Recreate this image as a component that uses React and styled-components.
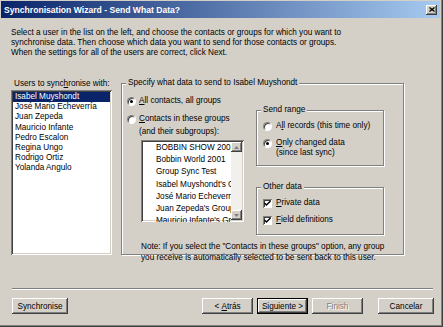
import React from "react";
import styled, { createGlobalStyle } from "styled-components";

const Global = createGlobalStyle`
  html, body { margin: 0; padding: 0; background: #d4d0c8; }
  body { font-family: "Liberation Sans", Arial, sans-serif; font-size: 8.2px; color: #000; }
  * { box-sizing: border-box; }
`;

const Window = styled.div`
  width: 443px;
  height: 327px;
  background: #d4d0c8;
  padding: 1px 3px 3px 1px;
  box-shadow: inset -1px -1px #404040, inset -2px -2px #808080;
  display: flex;
  flex-direction: column;
  overflow: hidden;
`;

const TitleBar = styled.div`
  height: 17px;
  display: flex;
  align-items: center;
  padding: 0 3px 0 3px;
  background: linear-gradient(to right, #0a246a, #a6caf0);
`;

const Title = styled.div`
  flex: 1;
  color: #fff;
  font-weight: bold;
  font-size: 8.6px;
  white-space: nowrap;
`;

const CloseButton = styled.div`
  width: 11px;
  height: 10px;
  background: #d4d0c8;
  box-shadow: inset -1px -1px #404040, inset 1px 1px #fff, inset -2px -2px #808080;
  display: flex;
  align-items: center;
  justify-content: center;
`;

const Content = styled.div`
  padding-left: 10px;
  display: flex;
  flex-direction: column;
`;

const Intro = styled.p`
  margin: 10px 0 0 0;
  line-height: 10px;
  white-space: nowrap;
`;

const MainRow = styled.div`
  display: flex;
  align-items: flex-start;
  margin-top: 21px;
  height: 176px;
`;

const UsersColumn = styled.div`
  width: 101px;
  display: flex;
  flex-direction: column;
`;

const FieldLabel = styled.div`
  line-height: 10px;
  padding-left: 3px;
  white-space: nowrap;
`;

const ListBox = styled.div`
  background: #fff;
  box-shadow: inset 1px 1px #808080, inset -1px -1px #fff, inset 2px 2px #404040, inset -2px -2px #d4d0c8;
  padding: 2px;
  overflow: hidden;
  position: relative;
`;

const UsersList = styled(ListBox)`
  margin-top: 1px;
  height: 165px;
`;

const UserRow = styled.div`
  line-height: 10.2px;
  padding-left: 2px;
  white-space: nowrap;
  background: ${(p) => (p.$selected ? "#0a246a" : "transparent")};
  color: ${(p) => (p.$selected ? "#fff" : "#000")};
`;

const GroupBox = styled.div`
  position: relative;
  border: 1px solid #808080;
  box-shadow: inset 1px 1px #fff, 1px 1px #fff;
`;

const Legend = styled.span`
  position: absolute;
  top: -6px;
  left: 4px;
  padding: 0 2px;
  line-height: 10px;
  background: #d4d0c8;
  white-space: nowrap;
`;

const MainGroup = styled(GroupBox)`
  margin-left: 9px;
  margin-top: 4px;
  width: 283px;
  height: 172px;
  padding: 12px 0 0 5px;
  display: flex;
  flex-direction: column;
`;

const GroupColumns = styled.div`
  display: flex;
  align-items: flex-start;
`;

const LeftPane = styled.div`
  width: 116px;
  display: flex;
  flex-direction: column;
`;

const RightPane = styled.div`
  width: 128px;
  margin-left: 13px;
  display: flex;
  flex-direction: column;
`;

const OptionRow = styled.div`
  display: flex;
  align-items: center;
  height: 10px;
  line-height: 10px;
  margin-top: ${(p) => p.$mt || 0}px;
  white-space: nowrap;
`;

const OptionText = styled.span`
  margin-left: ${(p) => p.$ml ?? 3}px;
`;

const SubText = styled.div`
  line-height: 10px;
  margin-top: ${(p) => p.$mt || 0}px;
  padding-left: ${(p) => p.$pl || 0}px;
  white-space: nowrap;
`;

const RadioCircle = styled.span`
  width: 9px;
  height: 9px;
  flex: none;
  border-radius: 50%;
  background: #fff;
  border: 1px solid;
  border-color: #808080 #fff #fff #808080;
  box-shadow: inset 1px 1px #404040;
  display: flex;
  align-items: center;
  justify-content: center;
  &::after {
    content: "";
    width: 3px;
    height: 3px;
    border-radius: 50%;
    background: ${(p) => (p.$checked ? "#000" : "transparent")};
  }
`;

const CheckSquare = styled.span`
  width: 9px;
  height: 9px;
  flex: none;
  background: #fff;
  box-shadow: inset 1px 1px #808080, inset -1px -1px #fff, inset 2px 2px #404040;
  display: flex;
  align-items: center;
  justify-content: center;
`;

const GroupsList = styled(ListBox)`
  margin-top: 3px;
  margin-left: 14px;
  width: 103px;
  height: 82px;
  padding-right: 13px;
`;

const GroupRow = styled.div`
  line-height: 12.2px;
  padding-left: 13px;
  white-space: nowrap;
  overflow: hidden;
`;

const ScrollBar = styled.div`
  position: absolute;
  top: 2px;
  right: 2px;
  bottom: 2px;
  width: 11px;
  display: flex;
  flex-direction: column;
  background-color: #f1f0ec;
`;

const ScrollArrow = styled.div`
  height: 10px;
  background: #d4d0c8;
  box-shadow: inset -1px -1px #404040, inset 1px 1px #fff, inset -2px -2px #808080;
  display: flex;
  align-items: center;
  justify-content: center;
  margin-top: ${(p) => (p.$bottom ? "auto" : 0)};
`;

const SendRangeBox = styled(GroupBox)`
  margin-top: 14px;
  height: 56px;
  padding: 10px 0 0 6px;
`;

const OtherDataBox = styled(GroupBox)`
  margin-top: 21px;
  height: 48px;
  padding: 10px 0 0 6px;
`;

const Note = styled.div`
  margin: 6px 0 0 14px;
  line-height: 11px;
  white-space: nowrap;
`;

const Separator = styled.div`
  margin: 33px 0 0 1px;
  width: 421px;
  height: 2px;
  border-top: 1px solid #808080;
  border-bottom: 1px solid #fff;
`;

const ButtonRow = styled.div`
  display: flex;
  margin: 8px 0 0 1px;
  width: 422px;
`;

const Button = styled.div`
  width: ${(p) => p.$w || 51}px;
  height: 16px;
  margin-left: ${(p) => p.$ml || 0}px;
  display: flex;
  align-items: center;
  justify-content: center;
  background: #d4d0c8;
  white-space: nowrap;
  color: ${(p) => (p.$disabled ? "#808080" : "#000")};
  text-shadow: ${(p) => (p.$disabled ? "1px 1px #fff" : "none")};
  box-shadow: ${(p) =>
    p.$default
      ? "inset 0 0 0 1px #000, inset -2px -2px #404040, inset 2px 2px #fff, inset -3px -3px #808080"
      : "inset -1px -1px #404040, inset 1px 1px #fff, inset -2px -2px #808080"};
`;

const U = styled.span`
  text-decoration: underline;
`;

const Check = () => (
  <svg width="7" height="7" viewBox="0 0 7 7">
    <path d="M0.5 3 L2.5 5 L6.5 1" fill="none" stroke="#000" strokeWidth="1.4" />
  </svg>
);

const Arrow = ({ down }) => (
  <svg width="5" height="3" viewBox="0 0 5 3">
    <path d={down ? "M0 0 H5 L2.5 3 Z" : "M0 3 H5 L2.5 0 Z"} fill="#808080" />
  </svg>
);

const users = [
  "Isabel Muyshondt",
  "José Mario Echeverría",
  "Juan Zepeda",
  "Mauricio Infante",
  "Pedro Escalon",
  "Regina Ungo",
  "Rodrigo Ortiz",
  "Yolanda Angulo",
];

const groups = [
  "BOBBIN SHOW 2001",
  "Bobbin World 2001",
  "Group Sync Test",
  "Isabel Muyshondt's Group",
  "José Mario Echeverría's Group",
  "Juan Zepeda's Group",
  "Mauricio Infante's Group",
];

export default function App() {
  return (
    <>
      <Global />
      <Window>
        <TitleBar>
          <Title>Synchronisation Wizard - Send What Data?</Title>
          <CloseButton>
            <svg width="6" height="5" viewBox="0 0 6 5">
              <path d="M0.5 0.5 L5.5 4.5 M5.5 0.5 L0.5 4.5" stroke="#000" strokeWidth="1.3" />
            </svg>
          </CloseButton>
        </TitleBar>
        <Content>
          <Intro>
            Select a user in the list on the left, and choose the contacts or groups for which you want to
            <br />
            synchronise data. Then choose which data you want to send for those contacts or groups.
            <br />
            When the settings for all of the users are correct, click Next.
          </Intro>
          <MainRow>
            <UsersColumn>
              <FieldLabel>
                Users to sync<U>h</U>ronise with:
              </FieldLabel>
              <UsersList>
                {users.map((u, i) => (
                  <UserRow key={u} $selected={i === 0}>
                    {u}
                  </UserRow>
                ))}
              </UsersList>
            </UsersColumn>
            <MainGroup>
              <Legend>Specify what data to send to Isabel Muyshondt</Legend>
              <GroupColumns>
                <LeftPane>
                  <OptionRow>
                    <RadioCircle $checked />
                    <OptionText>
                      <U>A</U>ll contacts, all groups
                    </OptionText>
                  </OptionRow>
                  <OptionRow $mt={8}>
                    <RadioCircle />
                    <OptionText>
                      <U>C</U>ontacts in these groups
                    </OptionText>
                  </OptionRow>
                  <SubText $mt={3} $pl={12}>
                    (and their subgroups):
                  </SubText>
                  <GroupsList>
                    {groups.map((g) => (
                      <GroupRow key={g}>{g}</GroupRow>
                    ))}
                    <ScrollBar>
                      <ScrollArrow>
                        <Arrow />
                      </ScrollArrow>
                      <ScrollArrow $bottom>
                        <Arrow down />
                      </ScrollArrow>
                    </ScrollBar>
                  </GroupsList>
                </LeftPane>
                <RightPane>
                  <SendRangeBox>
                    <Legend>Send range</Legend>
                    <OptionRow>
                      <RadioCircle />
                      <OptionText $ml={4}>
                        A<U>l</U>l records (this time only)
                      </OptionText>
                    </OptionRow>
                    <OptionRow $mt={7}>
                      <RadioCircle $checked />
                      <OptionText $ml={4}>
                        <U>O</U>nly changed data
                      </OptionText>
                    </OptionRow>
                    <SubText $pl={13}>(since last sync)</SubText>
                  </SendRangeBox>
                  <OtherDataBox>
                    <Legend>Other data</Legend>
                    <OptionRow>
                      <CheckSquare>
                        <Check />
                      </CheckSquare>
                      <OptionText $ml={4}>
                        <U>P</U>rivate data
                      </OptionText>
                    </OptionRow>
                    <OptionRow $mt={7}>
                      <CheckSquare>
                        <Check />
                      </CheckSquare>
                      <OptionText $ml={4}>
                        <U>F</U>ield definitions
                      </OptionText>
                    </OptionRow>
                  </OtherDataBox>
                </RightPane>
              </GroupColumns>
              <Note>
                Note: If you select the "Contacts in these groups" option, any group
                <br />
                you receive is automatically selected to be sent back to this user.
              </Note>
            </MainGroup>
          </MainRow>
          <Separator />
          <ButtonRow>
            <Button $w={56}>Synchronise</Button>
            <Button $ml={134}>
              &lt;&nbsp;<U>A</U>trás
            </Button>
            <Button $ml={4} $default>
              Siguiente &gt;
            </Button>
            <Button $ml={4} $disabled>
              Finish
            </Button>
            <Button $ml={15} $w={56}>
              Cancelar
            </Button>
          </ButtonRow>
        </Content>
      </Window>
    </>
  );
}
